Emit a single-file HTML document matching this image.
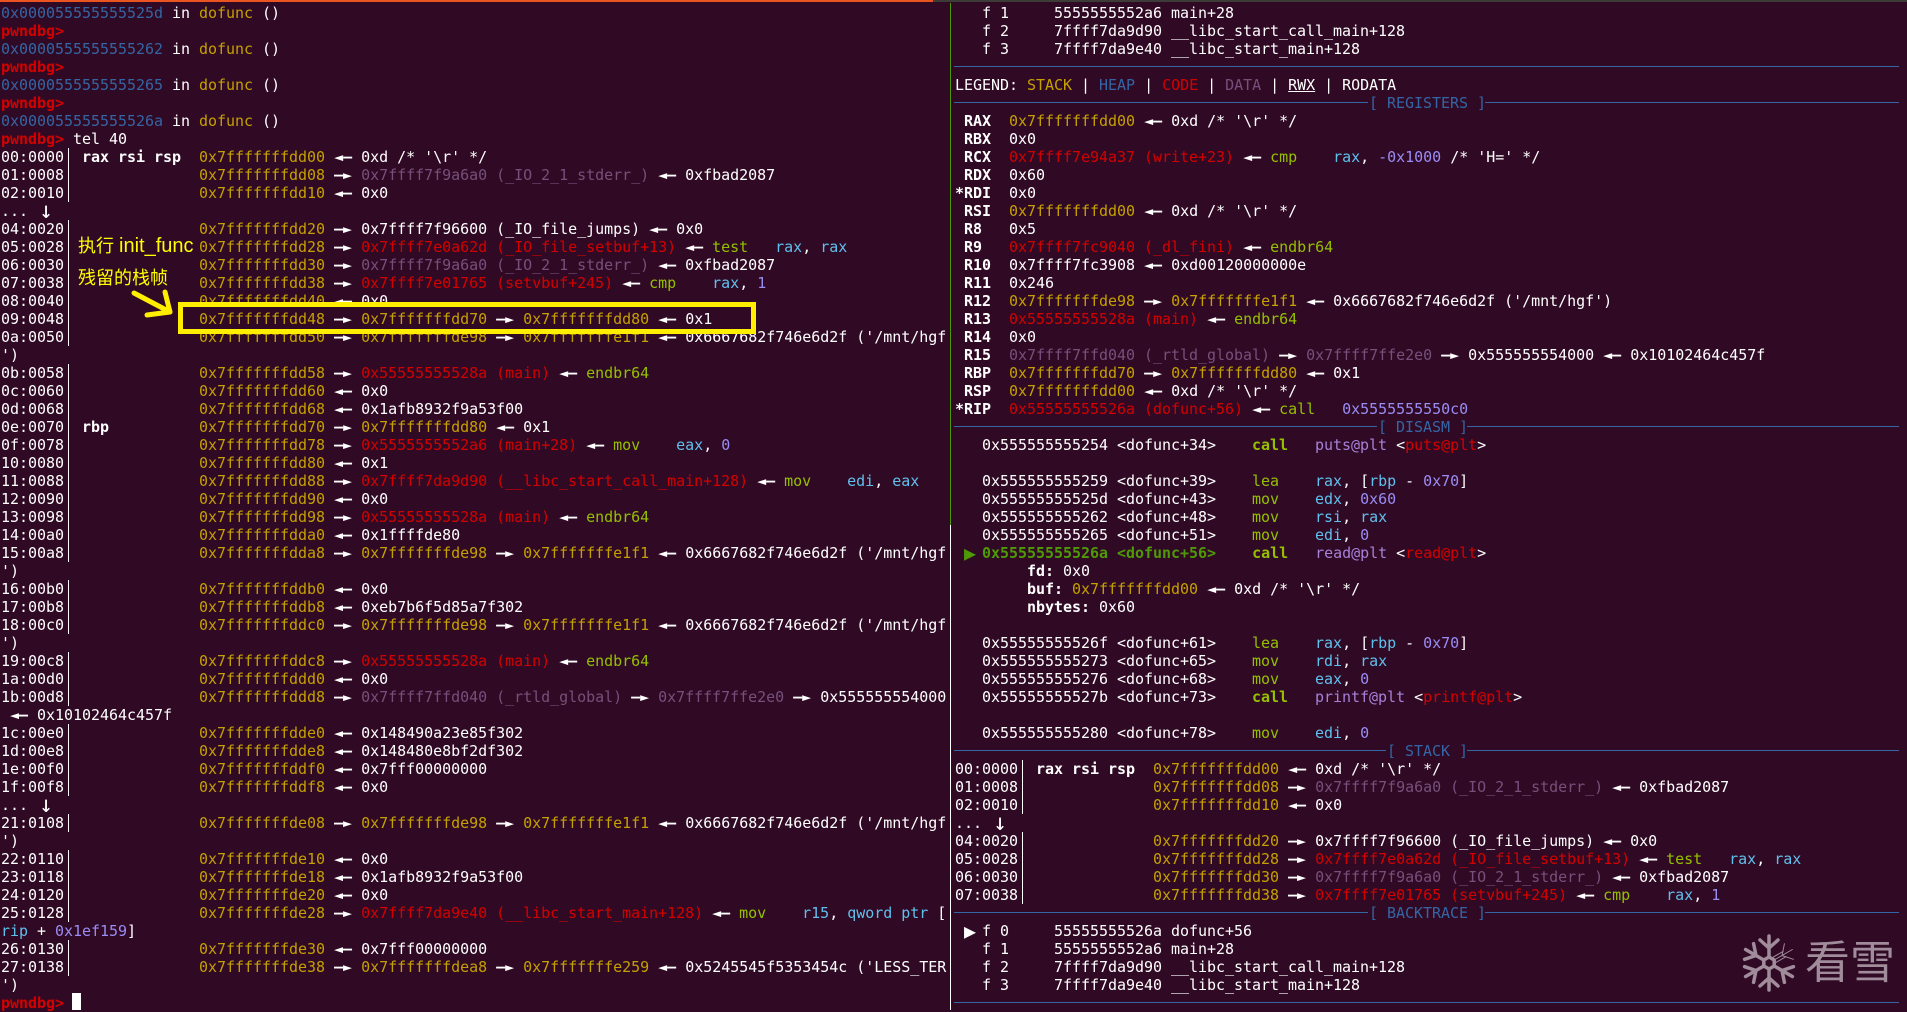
<!DOCTYPE html>
<html><head><meta charset="utf-8"><title>pwndbg</title>
<style>
html,body{margin:0;padding:0;width:1907px;height:1010px;overflow:hidden;background:#300a24}
pre{position:absolute;top:4px;margin:0;font:15px/18px "DejaVu Sans Mono","Liberation Mono",monospace;letter-spacing:-.0307px;color:#fff;white-space:pre}
#L{left:1px}#R{left:955px}
i{font-style:normal}
.A{color:#c4a000}.R{color:#d40000}.M{color:#75507b}.G{color:#94c000}.C{color:#5fc0ee}.P{color:#9a8cf5}.H{color:#3465a4}.L{color:#a681d8}.N{color:#4e9a06;font-weight:bold}
.W{display:inline-block;width:18px;height:18px;line-height:18px;font-size:23px;text-align:center;vertical-align:top;font-weight:normal}
.K{display:inline-block;width:9px;height:18px;line-height:18px;font-size:20px;vertical-align:top;font-weight:normal}
.d{position:absolute;background:#fff}
.u{position:absolute;height:1px;background:#3465a4}
.t{position:absolute;font:18px/24px "Liberation Sans","Noto Sans CJK SC",sans-serif;color:#ffff00;white-space:nowrap}
.t span{font-size:20px}
</style></head><body>
<div class="d" style="left:0;top:0;width:933px;height:2px;background:#e95420"></div>
<div class="d" style="left:933px;top:0;width:974px;height:2px;background:#3c3b37"></div>
<div class="d" style="left:950px;top:3px;width:1px;height:522px;background:#4e9a06"></div>
<div class="d" style="left:950px;top:525px;width:1px;height:485px"></div>
<div class="d" style="left:68px;top:148px;width:1px;height:54px"></div>
<div class="d" style="left:68px;top:220px;width:1px;height:126px"></div>
<div class="d" style="left:68px;top:364px;width:1px;height:198px"></div>
<div class="d" style="left:68px;top:580px;width:1px;height:54px"></div>
<div class="d" style="left:68px;top:652px;width:1px;height:54px"></div>
<div class="d" style="left:68px;top:724px;width:1px;height:72px"></div>
<div class="d" style="left:68px;top:814px;width:1px;height:18px"></div>
<div class="d" style="left:68px;top:850px;width:1px;height:72px"></div>
<div class="d" style="left:68px;top:940px;width:1px;height:36px"></div>
<div class="d" style="left:1022px;top:760px;width:1px;height:54px"></div>
<div class="d" style="left:1022px;top:832px;width:1px;height:72px"></div>
<div class="u" style="left:954px;top:66px;width:945px"></div>
<div class="u" style="left:954px;top:102px;width:414px"></div><div class="u" style="left:1485px;top:102px;width:414px"></div>
<div class="u" style="left:954px;top:426px;width:423px"></div><div class="u" style="left:1467px;top:426px;width:432px"></div>
<div class="u" style="left:954px;top:750px;width:432px"></div><div class="u" style="left:1467px;top:750px;width:432px"></div>
<div class="u" style="left:954px;top:912px;width:414px"></div><div class="u" style="left:1485px;top:912px;width:414px"></div>
<div class="u" style="left:954px;top:1002px;width:945px"></div>
<pre id="L"><i class=H>0x000055555555525d</i> in <i class=A>dofunc</i> ()
<b class=R>pwndbg&gt;</b>
<i class=H>0x0000555555555262</i> in <i class=A>dofunc</i> ()
<b class=R>pwndbg&gt;</b>
<i class=H>0x0000555555555265</i> in <i class=A>dofunc</i> ()
<b class=R>pwndbg&gt;</b>
<i class=H>0x000055555555526a</i> in <i class=A>dofunc</i> ()
<b class=R>pwndbg&gt;</b> tel 40
00:0000  <b>rax rsi rsp</b>  <i class=A>0x7fffffffdd00</i> <b>◄—</b> 0xd /* '\r' */
01:0008               <i class=A>0x7fffffffdd08</i> <b>—►</b> <i class=M>0x7ffff7f9a6a0 (_IO_2_1_stderr_)</i> <b>◄—</b> 0xfbad2087
02:0010               <i class=A>0x7fffffffdd10</i> <b>◄—</b> 0x0
... <i class=W>↓</i>
04:0020               <i class=A>0x7fffffffdd20</i> <b>—►</b> 0x7ffff7f96600 (_IO_file_jumps) <b>◄—</b> 0x0
05:0028               <i class=A>0x7fffffffdd28</i> <b>—►</b> <i class=R>0x7ffff7e0a62d (_IO_file_setbuf+13)</i> <b>◄—</b> <i class=G>test</i>   <i class=C>rax</i>, <i class=C>rax</i>
06:0030               <i class=A>0x7fffffffdd30</i> <b>—►</b> <i class=M>0x7ffff7f9a6a0 (_IO_2_1_stderr_)</i> <b>◄—</b> 0xfbad2087
07:0038               <i class=A>0x7fffffffdd38</i> <b>—►</b> <i class=R>0x7ffff7e01765 (setvbuf+245)</i> <b>◄—</b> <i class=G>cmp</i>    <i class=C>rax</i>, <i class=P>1</i>
08:0040               <i class=A>0x7fffffffdd40</i> <b>◄—</b> 0x0
09:0048               <i class=A>0x7fffffffdd48</i> <b>—►</b> <i class=A>0x7fffffffdd70</i> <b>—►</b> <i class=A>0x7fffffffdd80</i> <b>◄—</b> 0x1
0a:0050               <i class=A>0x7fffffffdd50</i> <b>—►</b> <i class=A>0x7fffffffde98</i> <b>—►</b> <i class=A>0x7fffffffe1f1</i> <b>◄—</b> 0x6667682f746e6d2f ('/mnt/hgf
')
0b:0058               <i class=A>0x7fffffffdd58</i> <b>—►</b> <i class=R>0x55555555528a (main)</i> <b>◄—</b> <i class=G>endbr64</i>
0c:0060               <i class=A>0x7fffffffdd60</i> <b>◄—</b> 0x0
0d:0068               <i class=A>0x7fffffffdd68</i> <b>◄—</b> 0x1afb8932f9a53f00
0e:0070  <b>rbp</b>          <i class=A>0x7fffffffdd70</i> <b>—►</b> <i class=A>0x7fffffffdd80</i> <b>◄—</b> 0x1
0f:0078               <i class=A>0x7fffffffdd78</i> <b>—►</b> <i class=R>0x5555555552a6 (main+28)</i> <b>◄—</b> <i class=G>mov</i>    <i class=C>eax</i>, <i class=P>0</i>
10:0080               <i class=A>0x7fffffffdd80</i> <b>◄—</b> 0x1
11:0088               <i class=A>0x7fffffffdd88</i> <b>—►</b> <i class=R>0x7ffff7da9d90 (__libc_start_call_main+128)</i> <b>◄—</b> <i class=G>mov</i>    <i class=C>edi</i>, <i class=C>eax</i>
12:0090               <i class=A>0x7fffffffdd90</i> <b>◄—</b> 0x0
13:0098               <i class=A>0x7fffffffdd98</i> <b>—►</b> <i class=R>0x55555555528a (main)</i> <b>◄—</b> <i class=G>endbr64</i>
14:00a0               <i class=A>0x7fffffffdda0</i> <b>◄—</b> 0x1ffffde80
15:00a8               <i class=A>0x7fffffffdda8</i> <b>—►</b> <i class=A>0x7fffffffde98</i> <b>—►</b> <i class=A>0x7fffffffe1f1</i> <b>◄—</b> 0x6667682f746e6d2f ('/mnt/hgf
')
16:00b0               <i class=A>0x7fffffffddb0</i> <b>◄—</b> 0x0
17:00b8               <i class=A>0x7fffffffddb8</i> <b>◄—</b> 0xeb7b6f5d85a7f302
18:00c0               <i class=A>0x7fffffffddc0</i> <b>—►</b> <i class=A>0x7fffffffde98</i> <b>—►</b> <i class=A>0x7fffffffe1f1</i> <b>◄—</b> 0x6667682f746e6d2f ('/mnt/hgf
')
19:00c8               <i class=A>0x7fffffffddc8</i> <b>—►</b> <i class=R>0x55555555528a (main)</i> <b>◄—</b> <i class=G>endbr64</i>
1a:00d0               <i class=A>0x7fffffffddd0</i> <b>◄—</b> 0x0
1b:00d8               <i class=A>0x7fffffffddd8</i> <b>—►</b> <i class=M>0x7ffff7ffd040 (_rtld_global)</i> <b>—►</b> <i class=M>0x7ffff7ffe2e0</i> <b>—►</b> 0x555555554000
 <b>◄—</b> 0x10102464c457f
1c:00e0               <i class=A>0x7fffffffdde0</i> <b>◄—</b> 0x148490a23e85f302
1d:00e8               <i class=A>0x7fffffffdde8</i> <b>◄—</b> 0x148480e8bf2df302
1e:00f0               <i class=A>0x7fffffffddf0</i> <b>◄—</b> 0x7fff00000000
1f:00f8               <i class=A>0x7fffffffddf8</i> <b>◄—</b> 0x0
... <i class=W>↓</i>
21:0108               <i class=A>0x7fffffffde08</i> <b>—►</b> <i class=A>0x7fffffffde98</i> <b>—►</b> <i class=A>0x7fffffffe1f1</i> <b>◄—</b> 0x6667682f746e6d2f ('/mnt/hgf
')
22:0110               <i class=A>0x7fffffffde10</i> <b>◄—</b> 0x0
23:0118               <i class=A>0x7fffffffde18</i> <b>◄—</b> 0x1afb8932f9a53f00
24:0120               <i class=A>0x7fffffffde20</i> <b>◄—</b> 0x0
25:0128               <i class=A>0x7fffffffde28</i> <b>—►</b> <i class=R>0x7ffff7da9e40 (__libc_start_main+128)</i> <b>◄—</b> <i class=G>mov</i>    <i class=C>r15</i>, <i class=C>qword ptr</i> [
<i class=C>rip</i> + <i class=P>0x1ef159</i>]
26:0130               <i class=A>0x7fffffffde30</i> <b>◄—</b> 0x7fff00000000
27:0138               <i class=A>0x7fffffffde38</i> <b>—►</b> <i class=A>0x7fffffffdea8</i> <b>—►</b> <i class=A>0x7fffffffe259</i> <b>◄—</b> 0x5245545f5353454c ('LESS_TER
')
<b class=R>pwndbg&gt;</b></pre>
<pre id="R">   f 1     5555555552a6 main+28
   f 2     7ffff7da9d90 __libc_start_call_main+128
   f 3     7ffff7da9e40 __libc_start_main+128

LEGEND: <i class=A>STACK</i> | <i class=H>HEAP</i> | <i class=R>CODE</i> | <i class=M>DATA</i> | <u>RWX</u> | RODATA
                                              <i class=H>[ REGISTERS ]</i>
 <b>RAX</b>  <i class=A>0x7fffffffdd00</i> <b>◄—</b> 0xd /* '\r' */
 <b>RBX</b>  0x0
 <b>RCX</b>  <i class=R>0x7ffff7e94a37 (write+23)</i> <b>◄—</b> <i class=G>cmp</i>    <i class=C>rax</i>, <i class=P>-0x1000</i> /* 'H=' */
 <b>RDX</b>  0x60
<b>*RDI</b>  0x0
 <b>RSI</b>  <i class=A>0x7fffffffdd00</i> <b>◄—</b> 0xd /* '\r' */
 <b>R8</b>   0x5
 <b>R9</b>   <i class=R>0x7ffff7fc9040 (_dl_fini)</i> <b>◄—</b> <i class=G>endbr64</i>
 <b>R10</b>  0x7ffff7fc3908 <b>◄—</b> 0xd00120000000e
 <b>R11</b>  0x246
 <b>R12</b>  <i class=A>0x7fffffffde98</i> <b>—►</b> <i class=A>0x7fffffffe1f1</i> <b>◄—</b> 0x6667682f746e6d2f ('/mnt/hgf')
 <b>R13</b>  <i class=R>0x55555555528a (main)</i> <b>◄—</b> <i class=G>endbr64</i>
 <b>R14</b>  0x0
 <b>R15</b>  <i class=M>0x7ffff7ffd040 (_rtld_global)</i> <b>—►</b> <i class=M>0x7ffff7ffe2e0</i> <b>—►</b> 0x555555554000 <b>◄—</b> 0x10102464c457f
 <b>RBP</b>  <i class=A>0x7fffffffdd70</i> <b>—►</b> <i class=A>0x7fffffffdd80</i> <b>◄—</b> 0x1
 <b>RSP</b>  <i class=A>0x7fffffffdd00</i> <b>◄—</b> 0xd /* '\r' */
<b>*RIP</b>  <i class=R>0x55555555526a (dofunc+56)</i> <b>◄—</b> <i class=G>call</i>   <i class=P>0x5555555550c0</i>
                                               <i class=H>[ DISASM ]</i>
   0x555555555254 &lt;dofunc+34&gt;    <b class=G>call</b>   <i class=L>puts@plt</i> &lt;<i class=R>puts@plt</i>&gt;

   0x555555555259 &lt;dofunc+39&gt;    <i class=G>lea</i>    <i class=C>rax</i>, [<i class=C>rbp</i> - <i class=P>0x70</i>]
   0x55555555525d &lt;dofunc+43&gt;    <i class=G>mov</i>    <i class=C>edx</i>, <i class=P>0x60</i>
   0x555555555262 &lt;dofunc+48&gt;    <i class=G>mov</i>    <i class=C>rsi</i>, <i class=C>rax</i>
   0x555555555265 &lt;dofunc+51&gt;    <i class=G>mov</i>    <i class=C>edi</i>, <i class=P>0</i>
 <i class=K style="color:#4e9a06">▶</i> <i class=N>0x55555555526a &lt;dofunc+56&gt;</i>    <b class=G>call</b>   <i class=L>read@plt</i> &lt;<i class=R>read@plt</i>&gt;
        <b>fd:</b> 0x0
        <b>buf:</b> <i class=A>0x7fffffffdd00</i> <b>◄—</b> 0xd /* '\r' */
        <b>nbytes:</b> 0x60

   0x55555555526f &lt;dofunc+61&gt;    <i class=G>lea</i>    <i class=C>rax</i>, [<i class=C>rbp</i> - <i class=P>0x70</i>]
   0x555555555273 &lt;dofunc+65&gt;    <i class=G>mov</i>    <i class=C>rdi</i>, <i class=C>rax</i>
   0x555555555276 &lt;dofunc+68&gt;    <i class=G>mov</i>    <i class=C>eax</i>, <i class=P>0</i>
   0x55555555527b &lt;dofunc+73&gt;    <b class=G>call</b>   <i class=L>printf@plt</i> &lt;<i class=R>printf@plt</i>&gt;

   0x555555555280 &lt;dofunc+78&gt;    <i class=G>mov</i>    <i class=C>edi</i>, <i class=P>0</i>
                                                <i class=H>[ STACK ]</i>
00:0000  <b>rax rsi rsp</b>  <i class=A>0x7fffffffdd00</i> <b>◄—</b> 0xd /* '\r' */
01:0008               <i class=A>0x7fffffffdd08</i> <b>—►</b> <i class=M>0x7ffff7f9a6a0 (_IO_2_1_stderr_)</i> <b>◄—</b> 0xfbad2087
02:0010               <i class=A>0x7fffffffdd10</i> <b>◄—</b> 0x0
... <i class=W>↓</i>
04:0020               <i class=A>0x7fffffffdd20</i> <b>—►</b> 0x7ffff7f96600 (_IO_file_jumps) <b>◄—</b> 0x0
05:0028               <i class=A>0x7fffffffdd28</i> <b>—►</b> <i class=R>0x7ffff7e0a62d (_IO_file_setbuf+13)</i> <b>◄—</b> <i class=G>test</i>   <i class=C>rax</i>, <i class=C>rax</i>
06:0030               <i class=A>0x7fffffffdd30</i> <b>—►</b> <i class=M>0x7ffff7f9a6a0 (_IO_2_1_stderr_)</i> <b>◄—</b> 0xfbad2087
07:0038               <i class=A>0x7fffffffdd38</i> <b>—►</b> <i class=R>0x7ffff7e01765 (setvbuf+245)</i> <b>◄—</b> <i class=G>cmp</i>    <i class=C>rax</i>, <i class=P>1</i>
                                              <i class=H>[ BACKTRACE ]</i>
 <i class=K>▶</i> f 0     55555555526a dofunc+56
   f 1     5555555552a6 main+28
   f 2     7ffff7da9d90 __libc_start_call_main+128
   f 3     7ffff7da9e40 __libc_start_main+128</pre>
<div class="d" style="left:72px;top:993px;width:9px;height:17px"></div>
<div style="position:absolute;left:178px;top:302px;width:568px;height:22px;border:5px solid #ffee00"></div>
<div class="t" style="left:78px;top:234px">执行 <span>init_func</span></div>
<div class="t" style="left:78px;top:266px">残留的栈帧</div>
<svg style="position:absolute;left:0;top:0" width="1907" height="1010" viewBox="0 0 1907 1010" fill="none">
<g stroke="#ffee00" stroke-width="5" stroke-linecap="round" stroke-linejoin="round"><path d="M134 293L170 312"/><path d="M165 292L170 312L147 315"/></g>
<g transform="translate(1769 963)" stroke="#a08c9b" stroke-width="3.5" stroke-linecap="round">
<path d="M0 -6L5.2 -3V3L0 6L-5.2 3V-3Z"/>
<path d="M0 -6V-27M-9 -23L0 -15L9 -23"/>
<path d="M0 6V27M-9 23L0 15L9 23"/>
<g transform="rotate(-60)"><path d="M0 -6V-27M-9 -23L0 -15L9 -23"/></g>
<g transform="rotate(-120)"><path d="M0 -6V-27M-9 -23L0 -15L9 -23"/></g>
<g transform="rotate(120)"><path d="M0 -6V-27M-9 -23L0 -15L9 -23"/></g>
<g transform="rotate(60)" stroke-width="1"><path d="M0 -6V-27M-9 -23L0 -15L9 -23M-3 -6V-18M3 -6V-18"/></g>
</g></svg>
<div style="position:absolute;left:1805px;top:929px;font:45px/60px 'Noto Sans CJK SC',sans-serif;color:#a08c9b;white-space:nowrap">看雪</div>
</body></html>
